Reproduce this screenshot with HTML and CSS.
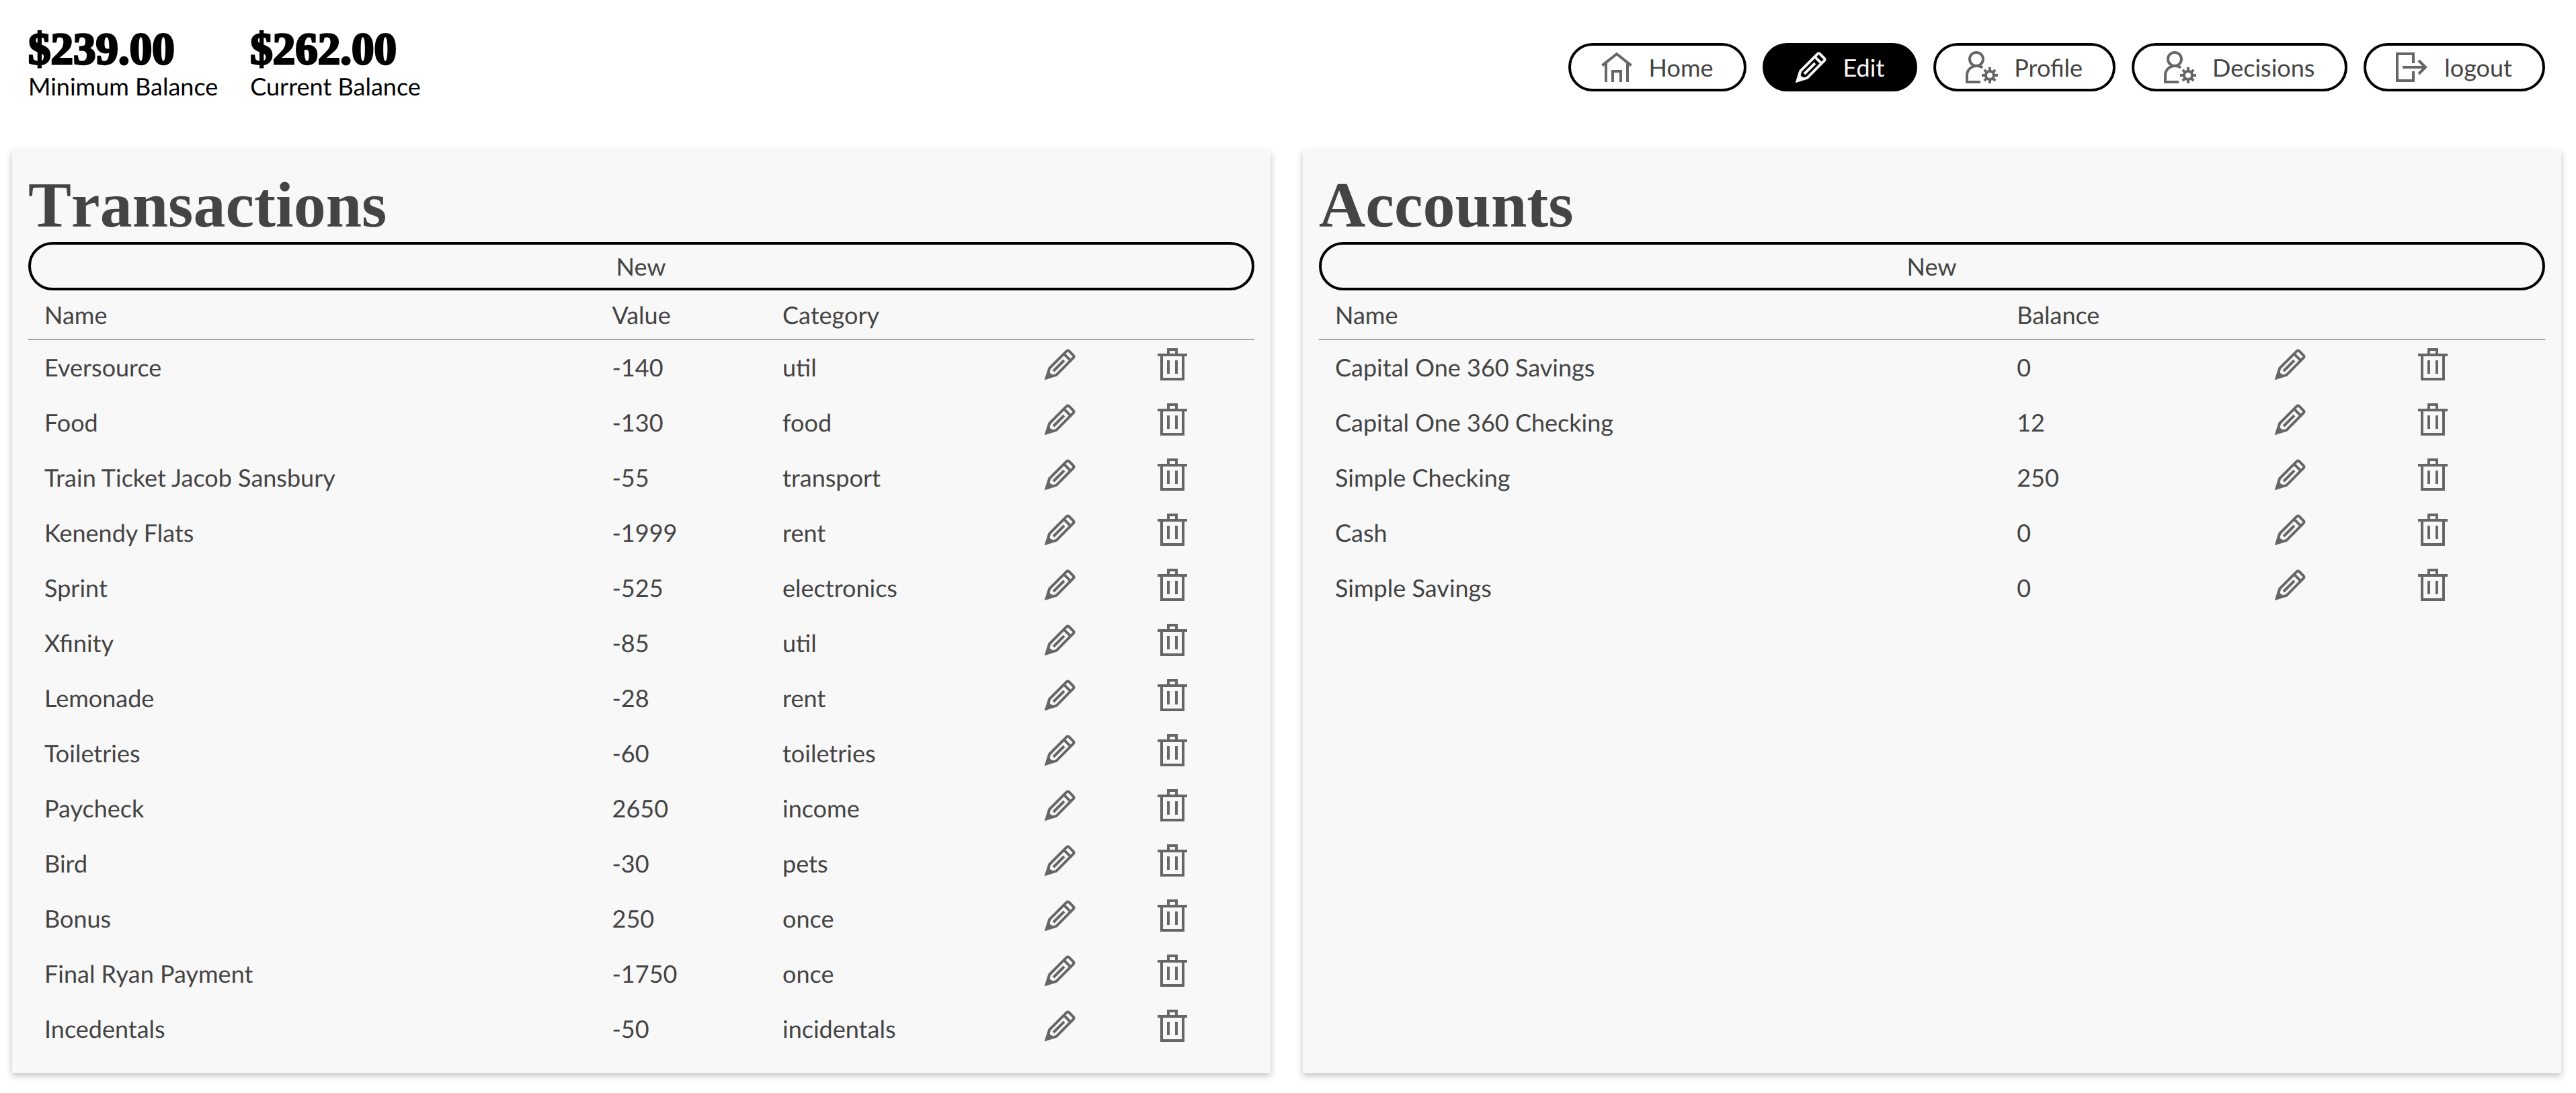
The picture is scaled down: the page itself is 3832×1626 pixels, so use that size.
FILE: index.html
```html
<!DOCTYPE html>
<html lang="en">
<head>
<meta charset="utf-8">
<title>Edit budget</title>
<meta name="viewport" content="width=device-width, initial-scale=1">
<link rel="stylesheet" href="styles.css">
</head>
<body>
<svg class="sprite" aria-hidden="true">
  <symbol id="home" viewBox="0 0 24 24"><path d="M1.2 10.7 12 2.1l10.8 8.6M4 8.500V23M20 8.500V23M9 23v-8h6v8"/></symbol>
  <symbol id="pencil" viewBox="0 0 24 24"><path d="M1.900 22.100 4.100 14.900 16.900 2.100a1.200 1.200 0 0 1 1.700 0l3.300 3.300a1.200 1.200 0 0 1 0 1.700L9.200 19.900ZM14.800 4.200l5 5M7 17l8-8"/><path class="solid" d="M.5 23.500 3.200 15l1.300 1.500c-.6 1.500.3 2.700 1.700 2.700.2 1.100 1 1.500 2.300 1.300Z"/></symbol>
  <symbol id="user" viewBox="0 0 24 24"><circle cx="8" cy="6" r="5"/><path d="M11 23H1v-5a7 7 0 0 1 7-7c1.800 0 3.300.4 4.600 1.300"/><circle cx="18" cy="18" r="3"/><path d="M18 12v3M18 21v3M12 18h3M21 18h3M13.900 13.900l2 2M20.100 20.100l2 2M22.100 13.900l-2 2M15.900 20.100l-2 2"/></symbol>
  <symbol id="logout" viewBox="0 0 24 24"><path d="M13 9V2H1v20h12v-7M5 12h17M17 7l5 5-5 5"/></symbol>
  <symbol id="trash" viewBox="0 0 24 24"><path d="M1 5h22M9 5V1h6v4M4 5v18h16V5M9 9v10M15 9v10"/></symbol>
</svg>

<header class="topbar">
  <dl class="balances">
    <div class="balance"><dt>Minimum Balance</dt><dd>$239.00</dd></div>
    <div class="balance"><dt>Current Balance</dt><dd>$262.00</dd></div>
  </dl>
  <nav class="nav">
    <a class="pill" href="#home"><svg class="icon"><use href="#home"/></svg>Home</a>
    <a class="pill active" href="#edit" aria-current="page"><svg class="icon"><use href="#pencil"/></svg>Edit</a>
    <a class="pill" href="#profile"><svg class="icon"><use href="#user"/></svg>Profile</a>
    <a class="pill" href="#decisions"><svg class="icon"><use href="#user"/></svg>Decisions</a>
    <a class="pill" href="#logout"><svg class="icon"><use href="#logout"/></svg>logout</a>
  </nav>
</header>

<main class="panels">
  <section class="panel">
    <h1>Transactions</h1>
    <button class="pill new" type="button">New</button>
    <table class="transactions">
      <colgroup><col class="name"><col class="value"><col class="category"><col class="edit"><col class="delete"></colgroup>
      <thead><tr><th>Name</th><th>Value</th><th>Category</th><th></th><th></th></tr></thead>
      <tbody>
        <tr><td>Eversource</td><td>-140</td><td>util</td><td class="action"><button aria-label="Edit"><svg class="icon"><use href="#pencil"/></svg></button></td><td class="action"><button aria-label="Delete"><svg class="icon"><use href="#trash"/></svg></button></td></tr>
        <tr><td>Food</td><td>-130</td><td>food</td><td class="action"><button aria-label="Edit"><svg class="icon"><use href="#pencil"/></svg></button></td><td class="action"><button aria-label="Delete"><svg class="icon"><use href="#trash"/></svg></button></td></tr>
        <tr><td>Train Ticket Jacob Sansbury</td><td>-55</td><td>transport</td><td class="action"><button aria-label="Edit"><svg class="icon"><use href="#pencil"/></svg></button></td><td class="action"><button aria-label="Delete"><svg class="icon"><use href="#trash"/></svg></button></td></tr>
        <tr><td>Kenendy Flats</td><td>-1999</td><td>rent</td><td class="action"><button aria-label="Edit"><svg class="icon"><use href="#pencil"/></svg></button></td><td class="action"><button aria-label="Delete"><svg class="icon"><use href="#trash"/></svg></button></td></tr>
        <tr><td>Sprint</td><td>-525</td><td>electronics</td><td class="action"><button aria-label="Edit"><svg class="icon"><use href="#pencil"/></svg></button></td><td class="action"><button aria-label="Delete"><svg class="icon"><use href="#trash"/></svg></button></td></tr>
        <tr><td>Xfinity</td><td>-85</td><td>util</td><td class="action"><button aria-label="Edit"><svg class="icon"><use href="#pencil"/></svg></button></td><td class="action"><button aria-label="Delete"><svg class="icon"><use href="#trash"/></svg></button></td></tr>
        <tr><td>Lemonade</td><td>-28</td><td>rent</td><td class="action"><button aria-label="Edit"><svg class="icon"><use href="#pencil"/></svg></button></td><td class="action"><button aria-label="Delete"><svg class="icon"><use href="#trash"/></svg></button></td></tr>
        <tr><td>Toiletries</td><td>-60</td><td>toiletries</td><td class="action"><button aria-label="Edit"><svg class="icon"><use href="#pencil"/></svg></button></td><td class="action"><button aria-label="Delete"><svg class="icon"><use href="#trash"/></svg></button></td></tr>
        <tr><td>Paycheck</td><td>2650</td><td>income</td><td class="action"><button aria-label="Edit"><svg class="icon"><use href="#pencil"/></svg></button></td><td class="action"><button aria-label="Delete"><svg class="icon"><use href="#trash"/></svg></button></td></tr>
        <tr><td>Bird</td><td>-30</td><td>pets</td><td class="action"><button aria-label="Edit"><svg class="icon"><use href="#pencil"/></svg></button></td><td class="action"><button aria-label="Delete"><svg class="icon"><use href="#trash"/></svg></button></td></tr>
        <tr><td>Bonus</td><td>250</td><td>once</td><td class="action"><button aria-label="Edit"><svg class="icon"><use href="#pencil"/></svg></button></td><td class="action"><button aria-label="Delete"><svg class="icon"><use href="#trash"/></svg></button></td></tr>
        <tr><td>Final Ryan Payment</td><td>-1750</td><td>once</td><td class="action"><button aria-label="Edit"><svg class="icon"><use href="#pencil"/></svg></button></td><td class="action"><button aria-label="Delete"><svg class="icon"><use href="#trash"/></svg></button></td></tr>
        <tr><td>Incedentals</td><td>-50</td><td>incidentals</td><td class="action"><button aria-label="Edit"><svg class="icon"><use href="#pencil"/></svg></button></td><td class="action"><button aria-label="Delete"><svg class="icon"><use href="#trash"/></svg></button></td></tr>
      </tbody>
    </table>
  </section>

  <section class="panel">
    <h1>Accounts</h1>
    <button class="pill new" type="button">New</button>
    <table class="accounts">
      <colgroup><col class="name"><col class="value"><col class="edit"><col class="delete"></colgroup>
      <thead><tr><th>Name</th><th>Balance</th><th></th><th></th></tr></thead>
      <tbody>
        <tr><td>Capital One 360 Savings</td><td>0</td><td class="action"><button aria-label="Edit"><svg class="icon"><use href="#pencil"/></svg></button></td><td class="action"><button aria-label="Delete"><svg class="icon"><use href="#trash"/></svg></button></td></tr>
        <tr><td>Capital One 360 Checking</td><td>12</td><td class="action"><button aria-label="Edit"><svg class="icon"><use href="#pencil"/></svg></button></td><td class="action"><button aria-label="Delete"><svg class="icon"><use href="#trash"/></svg></button></td></tr>
        <tr><td>Simple Checking</td><td>250</td><td class="action"><button aria-label="Edit"><svg class="icon"><use href="#pencil"/></svg></button></td><td class="action"><button aria-label="Delete"><svg class="icon"><use href="#trash"/></svg></button></td></tr>
        <tr><td>Cash</td><td>0</td><td class="action"><button aria-label="Edit"><svg class="icon"><use href="#pencil"/></svg></button></td><td class="action"><button aria-label="Delete"><svg class="icon"><use href="#trash"/></svg></button></td></tr>
        <tr><td>Simple Savings</td><td>0</td><td class="action"><button aria-label="Edit"><svg class="icon"><use href="#pencil"/></svg></button></td><td class="action"><button aria-label="Delete"><svg class="icon"><use href="#trash"/></svg></button></td></tr>
      </tbody>
    </table>
  </section>
</main>
</body>
</html>
```
FILE: styles.css
```css
* {
  box-sizing: border-box;
}

body {
  margin: 0;
  padding: 0 22px 30px 18px;
  background: #fff;
  color: #444;
  font: 36px/48px Lato, "Liberation Sans", sans-serif;
  text-rendering: geometricPrecision;
}

.sprite {
  display: none;
}

.icon {
  display: block;
  flex: none;
  width: 48px;
  height: 48px;
  fill: none;
  stroke: #666;
  stroke-width: 2;
}

.solid {
  fill: var(--solid, #666);
  stroke: none;
}

/* Header */
.topbar {
  display: flex;
  justify-content: space-between;
  align-items: flex-start;
  padding: 40px 24px 74px;
}

.balances {
  display: flex;
  gap: 48px;
  margin: 0;
  color: #000;
}

.balance {
  display: flex;
  flex-direction: column-reverse;
}

.balance dt {
  line-height: 44px;
}

.balance dd {
  margin: 0;
  font: bold 67px/66px "Liberation Serif", serif;
  -webkit-text-stroke: 3px #000;
}

.nav {
  display: flex;
  gap: 24px;
  padding-top: 24px;
}

.pill {
  display: flex;
  align-items: center;
  justify-content: center;
  gap: 24px;
  height: 72px;
  padding: 0 45px 0 44px;
  border: 4px solid #000;
  border-radius: 36px;
  background: transparent;
  color: #444;
  font: inherit;
  text-decoration: none;
  text-rendering: inherit;
}

.pill.active {
  background: #000;
  color: #f8f8f8;
}

.pill.active .icon {
  --solid: #f8f8f8;
  stroke: #f8f8f8;
}

/* Panels */
.panels {
  display: grid;
  grid-template-columns: 1fr 1fr;
  gap: 48px;
}

.panel {
  padding: 24px;
  background: #f8f8f8;
  box-shadow: 0 4px 10px rgba(0, 0, 0, 0.25);
}

h1 {
  margin: 0;
  padding-top: 2px;
  font: bold 96px/110px "Liberation Serif", serif;
  font-kerning: none;
}

.new {
  width: 100%;
}

/* Tables */
table {
  width: 100%;
  table-layout: fixed;
  border-spacing: 0;
}

th,
td {
  padding: 12px 24px;
  text-align: left;
  font-weight: normal;
}

th {
  border-bottom: 2px solid #a4a4a4;
}

td {
  padding-bottom: 14px;
  line-height: 56px;
}

.action {
  vertical-align: top;
}

.action button {
  display: block;
  padding: 0;
  border: 0;
  background: none;
}

.transactions .name { width: 46.3%; }
.transactions .value { width: 13.9%; }
.transactions .category { width: 21.3%; }
.transactions .edit { width: 9.2%; }

.accounts .name { width: 55.6%; }
.accounts .value { width: 21%; }
.accounts .edit { width: 11.6%; }
```
